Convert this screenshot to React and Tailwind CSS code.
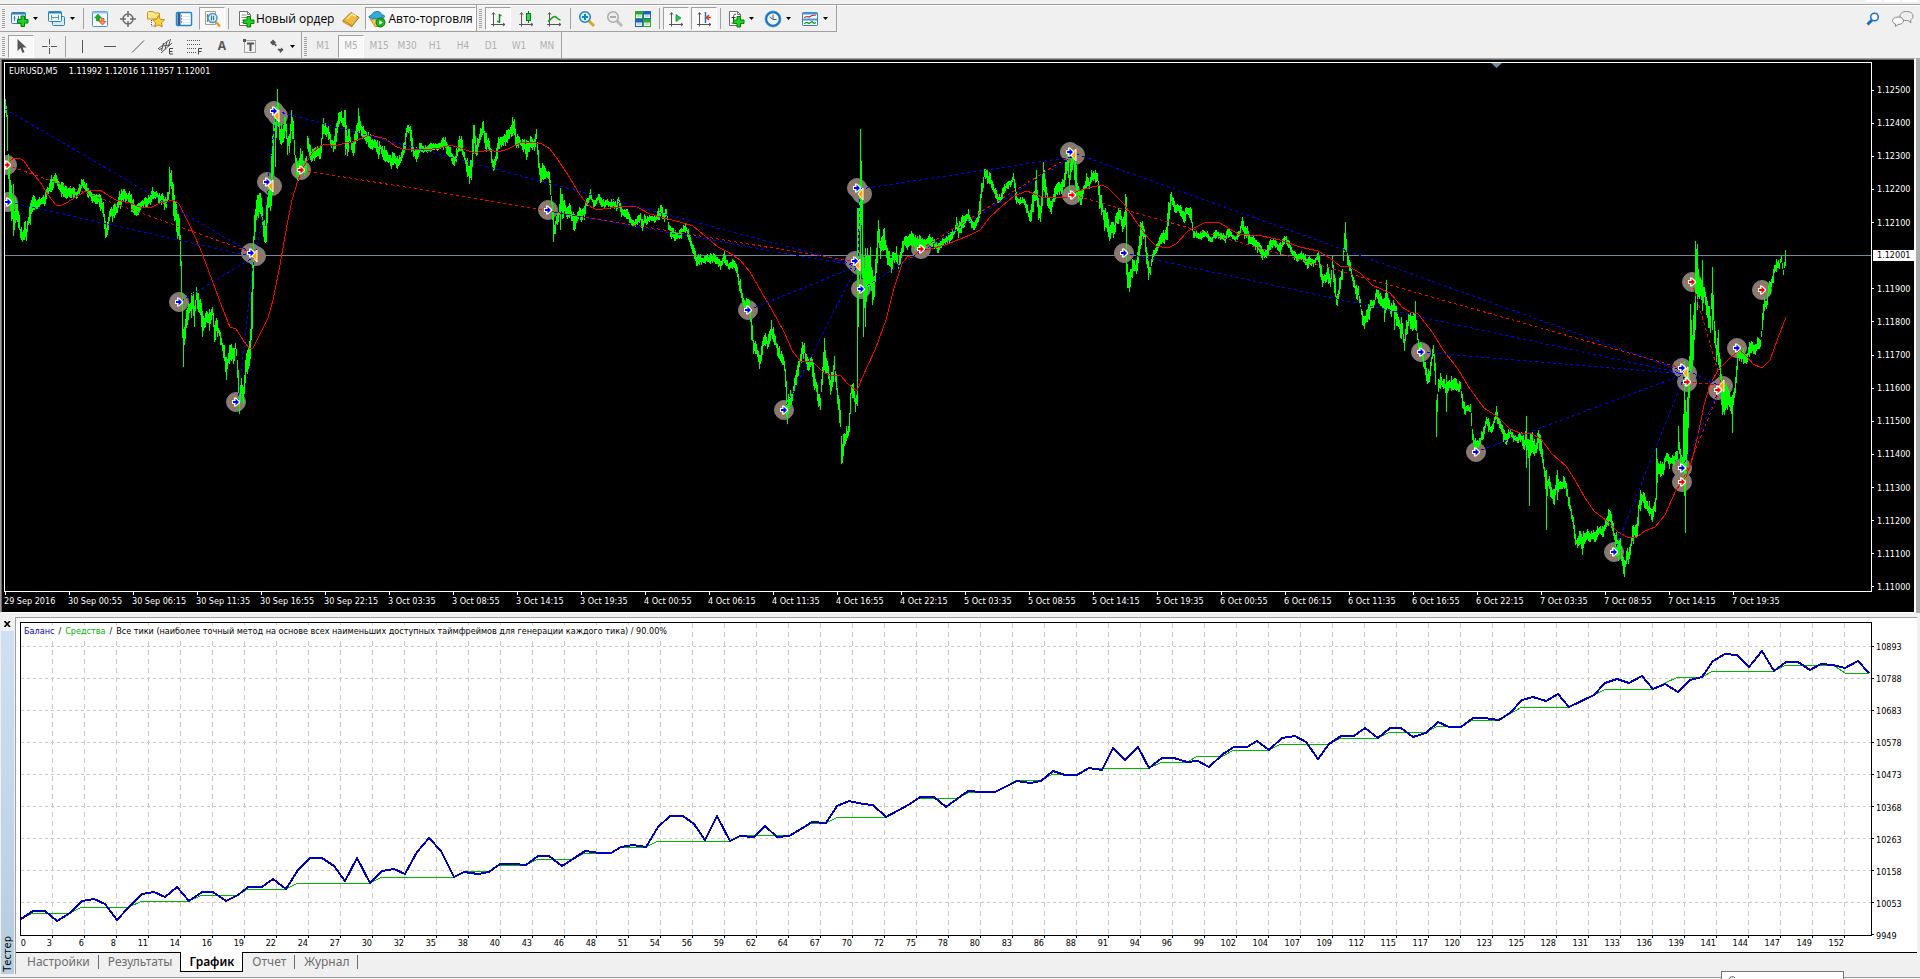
import React from "react";

/* ------------------------------------------------------------------ */
/* Data                                                                */
/* ------------------------------------------------------------------ */

// x, high, low
const PRICE_RANGE = `
4 97 115,6 103 118,7 115 150,8 150 180,9 160 200,10 175 215,12 195 225,14 205 228,16 195 220,18 205 225,20 225 240,22 232 244,
24 218 238,26 228 242,28 212 230,30 200 222,33 195 212,36 198 210,40 196 206,44 195 205,47 188 198,50 178 192,54 173 184,57 178 188,
60 180 195,64 186 196,68 188 198,72 187 197,76 190 198,80 182 192,82 178 186,85 182 192,90 190 200,94 194 204,98 192 206,101 198 212,
103 204 216,105 215 238,106 222 243,108 215 228,110 210 220,113 206 220,116 204 214,120 190 206,123 190 202,127 192 202,131 195 210,
133 198 212,136 205 218,138 202 215,141 200 206,145 197 207,149 195 206,152 186 200,155 190 200,158 192 202,161 194 204,165 198 210,
168 190 204,169 168 195,171 170 188,173 182 215,175 200 225,177 215 240,179 215 240,180 230 270,181 255 300,182 290 340,183 325 367,
184 322 350,186 305 330,188 300 318,190 300 315,192 290 315,194 300 325,196 288 305,198 295 315,200 302 320,202 310 335,204 315 330,
206 308 320,209 312 330,212 306 318,214 325 345,216 320 335,219 328 338,222 338 355,224 348 365,226 358 378,228 352 365,230 340 360,
232 345 358,234 345 365,235 342 350,236 345 360,238 365 395,239 395 412,241 380 400,243 385 402,244 370 392,246 352 375,249 340 370,
250 325 358,252 260 330,253 230 290,254 215 240,256 198 225,258 195 218,259 188 212,261 198 222,263 220 240,265 225 245,266 208 240,
268 188 212,270 185 212,271 150 205,273 120 180,274 105 130,275 110 168,277 90 115,278 105 130,280 125 145,282 125 148,284 115 135,
286 120 140,287 135 155,289 130 150,291 108 135,293 120 145,295 150 165,297 160 180,298 165 185,300 150 165,302 153 165,304 165 178,
306 155 172,307 135 150,309 140 155,311 148 162,313 150 160,316 148 160,318 145 158,320 148 158,322 117 145,324 122 135,327 125 138,
329 130 142,331 138 148,333 138 150,336 125 145,338 112 125,340 110 125,342 115 128,344 112 128,345 111 135,347 135 160,349 128 145,
351 140 150,353 140 155,355 130 150,357 125 142,358 110 135,360 122 132,362 125 138,365 130 142,368 132 145,372 138 150,375 138 148,
378 144 160,380 142 152,384 148 160,388 155 165,391 155 168,393 152 165,396 158 168,400 155 165,403 145 158,405 135 148,407 123 132,
409 123 135,411 130 155,413 148 158,416 148 160,420 143 153,424 146 152,430 144 152,434 144 150,440 140 150,444 138 150,448 142 155,
451 152 162,454 155 168,456 150 162,459 138 152,461 136 150,463 148 158,466 160 172,469 160 188,471 155 180,473 125 155,474 124 140,
476 140 162,478 138 150,480 128 140,483 122 138,486 135 152,489 138 150,491 150 162,493 162 172,496 150 165,498 135 148,502 135 146,
505 132 145,508 130 140,512 120 135,514 122 138,516 135 148,519 138 146,523 140 150,526 140 158,528 138 155,530 138 148,533 140 150,
535 130 148,536 128 140,538 150 168,540 165 182,543 165 178,546 170 180,548 170 182,550 178 195,552 205 222,553 215 240,554 222 235,
556 212 228,558 208 225,560 190 215,562 195 220,564 200 212,567 206 220,570 205 218,572 210 225,574 215 232,576 215 225,579 208 215,
581 210 222,584 205 218,586 198 210,588 196 204,590 190 200,593 200 206,596 198 205,598 192 200,601 198 206,604 200 208,607 198 206,
610 200 208,613 200 208,616 203 212,618 196 206,621 206 218,624 208 216,627 210 218,630 215 226,634 220 227,637 216 224,640 212 222,
642 220 230,644 215 225,646 218 224,650 215 222,654 217 222,658 210 220,661 204 216,664 214 222,666 206 216,668 220 230,670 226 236,
673 230 240,676 232 240,680 230 240,683 224 232,686 226 232,688 230 240,691 238 248,693 245 255,695 253 265,698 254 264,702 256 264,
705 256 263,709 255 263,713 254 264,716 256 264,720 262 270,724 252 262,728 264 270,732 260 268,736 262 272,738 275 288,740 280 292,
743 296 306,745 298 312,749 300 315,751 318 338,753 335 352,755 342 355,757 348 358,759 355 370,761 348 360,764 332 345,767 338 348,
769 330 345,771 322 335,773 328 340,776 340 350,779 348 362,782 355 365,784 360 372,786 380 415,787 395 422,789 392 412,792 392 402,
794 378 390,797 365 380,799 355 368,802 342 358,804 343 355,806 355 368,809 358 370,811 355 368,813 365 385,816 380 395,818 392 405,
820 395 408,822 362 385,824 340 368,826 360 375,828 365 378,830 375 395,832 368 385,834 358 375,836 375 388,838 390 415,840 405 430,
841 430 465,842 440 464,844 430 448,846 428 442,848 425 440,850 395 420,851 380 400,853 385 398,855 395 412,857 385 405,858 210 320,
859 180 230,860 140 205,861 170 225,862 190 280,863 260 335,864 270 310,866 250 300,868 250 290,870 250 285,872 275 300,873 280 305,
875 262 285,877 228 262,878 222 245,880 235 262,882 235 250,884 228 250,886 245 262,889 250 265,891 258 272,893 250 262,896 248 265,
898 262 271,901 245 258,903 238 250,905 234 248,908 238 250,911 232 245,914 236 248,917 235 250,920 235 248,924 238 250,927 235 245,
931 236 246,935 240 250,938 242 252,942 238 246,945 238 244,948 234 243,951 232 240,954 228 236,956 218 230,958 225 238,960 222 234,
963 212 226,965 215 225,968 210 220,971 220 228,974 222 230,976 218 228,978 210 220,980 190 212,982 178 195,984 168 180,986 165 178,
988 172 188,990 173 185,992 182 192,995 190 200,998 194 204,1000 196 206,1003 186 196,1006 182 190,1010 180 186,1013 174 182,
1015 185 200,1017 195 205,1020 198 205,1023 198 204,1026 203 212,1029 210 224,1031 205 220,1033 190 210,1036 175 200,1038 200 218,
1040 205 220,1042 175 205,1043 162 185,1046 185 200,1048 195 208,1050 200 216,1053 192 205,1056 185 195,1058 182 195,1061 178 192,
1063 178 190,1065 160 180,1067 155 172,1069 170 195,1071 158 175,1073 155 165,1075 160 190,1078 185 205,1081 190 205,1083 185 195,
1086 175 188,1089 182 190,1091 170 182,1094 170 182,1097 172 182,1099 188 210,1102 200 216,1104 208 230,1107 215 235,1109 225 240,
1111 222 235,1114 220 236,1116 212 225,1119 208 220,1122 220 232,1125 205 225,1126 200 250,1127 260 290,1129 275 292,1131 265 280,
1133 258 272,1136 262 275,1138 248 265,1140 225 248,1142 222 236,1144 225 240,1146 245 265,1148 262 278,1150 265 275,1152 252 262,
1155 245 255,1158 238 248,1161 232 242,1164 230 242,1166 225 245,1168 205 228,1170 190 210,1171 190 200,1174 202 212,1176 205 215,
1178 202 212,1181 208 216,1184 210 222,1186 206 216,1189 208 218,1191 208 225,1193 228 238,1197 232 238,1200 232 240,1203 230 236,
1207 232 238,1211 236 244,1214 230 238,1218 232 238,1222 234 240,1225 235 242,1227 228 238,1231 232 238,1235 236 242,1239 230 236,
1242 216 228,1244 225 240,1247 228 240,1250 235 246,1253 236 246,1256 240 250,1259 244 254,1262 248 258,1264 252 260,1267 246 256,
1270 240 250,1273 240 246,1277 242 250,1280 244 254,1283 238 246,1285 236 242,1289 242 250,1292 248 256,1295 250 262,1298 254 262,
1301 250 260,1304 255 264,1307 257 268,1310 256 264,1313 260 268,1316 254 262,1318 252 262,1320 260 275,1322 272 288,1325 272 284,
1327 265 280,1330 275 285,1332 258 272,1334 270 290,1336 292 310,1337 290 308,1339 280 295,1342 265 280,1344 235 252,1345 225 245,
1347 250 265,1350 260 275,1352 270 285,1355 283 295,1358 285 300,1360 300 310,1362 312 325,1364 315 328,1367 310 325,1369 300 318,
1371 300 310,1374 296 308,1376 288 300,1379 290 304,1381 296 308,1384 298 312,1386 285 310,1388 298 308,1391 305 318,1393 300 310,
1395 302 325,1398 315 330,1400 320 335,1402 320 340,1404 335 354,1406 322 338,1409 312 325,1412 315 330,1415 312 325,1418 340 350,
1421 345 355,1424 360 370,1427 372 385,1429 370 382,1431 355 370,1433 345 355,1435 360 385,1436 400 434,1438 375 395,1440 375 388,
1443 378 390,1446 385 395,1448 382 392,1451 378 390,1454 378 388,1457 380 390,1460 382 392,1462 395 410,1465 406 414,1468 405 412,
1470 405 412,1472 425 438,1474 438 450,1476 440 450,1478 442 450,1480 435 445,1483 428 438,1486 415 428,1489 422 432,1491 426 434,
1494 415 425,1496 406 420,1499 418 428,1502 426 438,1505 432 446,1508 430 440,1510 428 436,1513 434 442,1516 436 442,1518 434 442,
1521 432 440,1524 436 455,1526 425 440,1527 435 455,1529 440 470,1531 430 455,1533 440 460,1536 440 458,1538 430 448,1541 440 455,
1543 455 475,1546 475 500,1548 475 490,1551 485 500,1554 490 503,1556 475 490,1558 480 492,1560 478 490,1562 480 490,1564 475 488,
1566 482 495,1568 495 505,1571 505 520,1573 518 530,1575 535 548,1577 538 548,1580 530 545,1582 538 553,1584 530 545,1586 530 540,
1589 532 542,1592 530 540,1595 534 544,1597 526 536,1600 526 534,1603 528 536,1605 520 530,1608 510 525,1610 508 520,1612 522 535,
1614 528 545,1616 535 560,1618 540 560,1620 538 555,1622 555 570,1624 562 577,1626 552 565,1628 548 562,1630 540 555,1632 528 545,
1635 522 535,1637 518 535,1639 495 515,1641 490 505,1643 492 505,1645 495 508,1648 502 515,1650 505 516,1652 508 520,1655 498 510,
1656 460 490,1658 460 475,1661 465 480,1663 462 475,1666 450 462,1669 455 468,1671 455 465,1674 455 465,1677 448 460,1678 430 445,
1680 450 462,1682 455 465,1684 380 490,1685 430 500,1687 400 455,1689 350 400,1690 315 370,1692 330 370,1694 300 345,1695 245 300,
1697 250 290,1698 272 295,1700 275 300,1702 290 310,1704 285 300,1706 300 318,1708 300 325,1710 310 330,1712 272 300,1714 320 340,
1716 340 360,1718 335 350,1720 360 395,1722 385 412,1724 395 415,1726 380 410,1728 385 405,1730 395 412,1732 400 420,1734 385 400,
1736 360 380,1738 345 362,1740 350 362,1743 350 362,1746 355 365,1749 342 355,1752 342 352,1755 345 355,1757 338 348,1760 340 348,
1762 315 330,1764 295 310,1766 300 312,1768 285 300,1771 280 290,1773 265 280,1776 260 270,1779 262 268,1781 255 262,1783 268 276,
1785 252 265,1786 250 258`;

// single long bars: x, top, bottom
const SPIKES = [
  [13, 184, 236], [277, 89, 112], [169, 167, 190], [183, 330, 367], [239, 395, 414], [860, 129, 280], [861, 161, 220],
  [857, 208, 400], [858, 208, 327], [863, 270, 335], [865, 248, 327], [872, 270, 305], [560, 188, 230], [345, 110, 155],
  [1125, 194, 225], [1126, 200, 275], [1043, 162, 190], [1036, 170, 200], [1345, 225, 250], [1386, 280, 310], [1436, 400, 434],
  [1415, 301, 330], [1526, 416, 468], [1529, 440, 506], [1546, 470, 530], [1557, 470, 500], [1624, 560, 577], [1685, 400, 533],
  [1684, 361, 496], [1690, 304, 372], [1695, 241, 330], [1697, 244, 310], [1702, 260, 305], [1712, 267, 330], [1718, 330, 365],
  [1732, 395, 433], [1678, 426, 450], [1656, 448, 500], [1446, 375, 412], [1394, 303, 330], [1384, 298, 322],
];

const MOVING_AVERAGE =
  "10,161 14,158 20,158 24,161 30,170 40,182 48,195 56,205 60,206 66,203 76,197 84,192 92,190 100,190 106,194 116,200 130,203 142,208 152,207 160,203 174,200 179,204 190,226 200,248 212,280 222,307 230,327 236,329 243,340 249,348 253,348 260,334 268,318 273,300 280,265 287,225 292,200 298,180 303,168 312,153 320,146 326,144 335,146 345,143 352,142 362,138 370,135 386,139 395,146 402,149 425,150 440,148 450,145 460,148 472,152 478,152 490,150 498,152 508,149 520,143 530,142 542,144 550,149 558,160 570,178 580,195 588,205 597,210 610,208 628,206 637,207 650,214 668,219 680,222 693,226 705,236 718,247 728,252 740,260 750,272 762,293 772,310 784,332 792,350 800,361 813,362 824,373 832,376 840,375 848,384 857,391 862,378 875,350 886,320 894,288 902,264 908,256 912,258 918,252 930,249 945,245 960,239 970,235 980,230 990,217 1002,206 1014,196 1027,191 1042,197 1065,198 1078,191 1092,187 1102,185 1108,188 1124,204 1135,220 1148,238 1156,246 1168,248 1176,244 1188,231 1206,222 1220,223 1238,234 1262,236 1280,240 1300,247 1318,251 1330,258 1340,266 1350,267 1360,273 1372,285 1390,293 1402,307 1410,312 1418,314 1425,323 1433,333 1443,350 1458,369 1468,386 1484,408 1498,417 1510,429 1520,433 1532,434 1541,439 1552,454 1566,466 1575,480 1585,498 1594,511 1607,521 1618,532 1629,538 1637,537 1645,531 1655,527 1665,515 1676,490 1686,477 1692,460 1698,435 1704,405 1710,385 1718,370 1730,358 1740,350 1747,357 1753,364 1762,368 1770,360 1778,338 1786,317";

const BUY = "#0000ff";
const SELL = "#ff0000";

// x1, y1, x2, y2, colour
const DEALS = [
  [5, 109, 250, 252, BUY], [9, 202, 250, 256, BUY], [7, 165, 250, 252, SELL], [181, 301, 256, 256, BUY],
  [238, 402, 254, 256, BUY], [256, 252, 269, 186, BUY], [268, 182, 276, 114, BUY], [276, 111, 857, 265, BUY],
  [302, 170, 857, 262, SELL], [548, 211, 857, 266, BUY], [749, 310, 857, 266, BUY], [784, 410, 857, 266, BUY],
  [858, 262, 860, 190, BUY], [860, 189, 1072, 157, BUY], [862, 289, 1072, 157, BUY], [921, 249, 1072, 155, SELL],
  [1071, 152, 1685, 372, BUY], [1073, 195, 1685, 369, SELL], [1124, 253, 1685, 374, BUY], [1421, 352, 1685, 374, BUY],
  [1476, 452, 1685, 374, BUY], [1614, 552, 1685, 375, BUY], [1687, 382, 1722, 385, SELL], [1682, 368, 1722, 387, BUY],
  [1682, 468, 1722, 385, BUY], [1682, 482, 1722, 385, SELL], [1692, 282, 1722, 385, SELL],
];

const OPENS = [
  [7, 165, SELL], [8, 202, BUY], [179, 302, BUY], [236, 402, BUY], [251, 253, BUY], [267, 182, BUY], [274, 111, BUY],
  [301, 170, SELL], [548, 210, BUY], [748, 310, BUY], [784, 410, BUY], [857, 188, BUY], [855, 261, BUY], [861, 289, BUY],
  [921, 249, SELL], [1070, 152, BUY], [1072, 195, SELL], [1124, 253, BUY], [1421, 352, BUY], [1476, 452, BUY],
  [1614, 552, BUY], [1682, 368, BUY], [1687, 382, SELL], [1692, 282, SELL], [1682, 468, BUY], [1682, 482, SELL],
  [1718, 390, SELL], [1737, 348, BUY], [1762, 290, SELL],
];

const CLOSES = [
  [256, 256], [272, 186], [278, 116], [862, 194], [859, 265], [1075, 155], [1687, 373], [1723, 386],
];

const PRICES = [
  "1.12500", "1.12400", "1.12300", "1.12200", "1.12100", "1.12001", "1.11900", "1.11800",
  "1.11700", "1.11600", "1.11500", "1.11400", "1.11300", "1.11200", "1.11100", "1.11000",
];

const TIMES = [
  "29 Sep 2016", "30 Sep 00:55", "30 Sep 06:15", "30 Sep 11:35", "30 Sep 16:55", "30 Sep 22:15", "3 Oct 03:35",
  "3 Oct 08:55", "3 Oct 14:15", "3 Oct 19:35", "4 Oct 00:55", "4 Oct 06:15", "4 Oct 11:35", "4 Oct 16:55",
  "4 Oct 22:15", "5 Oct 03:35", "5 Oct 08:55", "5 Oct 14:15", "5 Oct 19:35", "6 Oct 00:55", "6 Oct 06:15",
  "6 Oct 11:35", "6 Oct 16:55", "6 Oct 22:15", "7 Oct 03:35", "7 Oct 08:55", "7 Oct 14:15", "7 Oct 19:35",
];

const BALANCE =
  "21,919 33,911 45,911 57,921 70,913 82,901 94,899 105,904 117,920 129,907 142,894 154,892 165,897 177,887 189,901 202,892 213,892 226,901 238,895 248,887 262,887 273,879 286,889 298,870 310,858 322,858 334,866 345,881 357,858 370,883 382,871 394,869 405,874 417,852 429,838 441,851 454,877 464,872 478,874 489,872 500,864 513,864 526,865 538,856 549,856 562,866 573,859 585,851 600,853 611,853 621,847 633,845 646,847 658,827 670,816 683,816 694,824 705,840 717,816 730,841 740,836 754,837 765,826 777,837 789,836 801,829 812,822 826,823 837,806 849,801 863,804 873,805 886,817 910,804 920,797 934,797 946,807 957,799 968,791 982,792 995,792 1017,781 1030,783 1041,781 1053,771 1065,775 1077,775 1089,768 1102,770 1113,748 1125,760 1138,747 1149,768 1162,758 1174,758 1187,762 1198,761 1209,767 1223,754 1234,747 1247,747 1257,741 1269,750 1282,738 1295,736 1306,742 1318,759 1329,744 1341,736 1354,736 1365,728 1378,738 1390,728 1401,728 1413,737 1426,733 1438,722 1449,727 1461,727 1473,718 1484,718 1499,720 1510,713 1522,700 1533,697 1546,701 1558,694 1569,707 1594,695 1605,683 1617,679 1629,683 1642,676 1653,689 1665,684 1678,692 1690,680 1702,677 1713,661 1725,654 1737,655 1749,667 1762,651 1774,671 1786,662 1798,662 1810,670 1821,664 1833,665 1845,668 1858,661 1869,673";

const EQUITY =
  "21,919 33,913 70,913 82,907 129,907 142,901 189,901 202,895 238,895 248,889 286,889 298,883 370,883 382,877 454,877 466,871 489,871 500,865 526,865 538,859 573,859 585,853 611,853 622,847 646,847 658,841 730,841 741,835 790,835 802,829 812,823 826,823 838,817 886,817 920,798 957,798 970,792 995,792 1017,780 1041,780 1053,774 1077,774 1090,768 1149,768 1162,762 1187,762 1198,756 1223,756 1234,750 1269,750 1281,744 1329,744 1341,738 1378,738 1390,732 1426,732 1438,726 1461,726 1473,720 1499,720 1522,707 1569,707 1594,695 1606,689 1653,689 1665,683 1678,677 1702,677 1713,671 1774,671 1786,665 1833,665 1845,673 1869,673";

const BALANCE_LEVELS = [10893, 10788, 10683, 10578, 10473, 10368, 10263, 10158, 10053, 9949];

const TRADE_NUMBERS = [
  3, 6, 8, 11, 14, 16, 19, 22, 24, 27, 30, 32, 35, 38, 40, 43, 46, 48, 51, 54, 56, 59, 62, 64, 67, 70, 72, 75, 78,
  80, 83, 86, 88, 91, 94, 96, 99, 102, 104, 107, 109, 112, 115, 117, 120, 123, 125, 128, 131, 133, 136, 139, 141,
  144, 147, 149, 152,
];

const TIMEFRAMES = ["M1", "M5", "M15", "M30", "H1", "H4", "D1", "W1", "MN"];

// One vertical bar per pixel column, jittered around the recorded range
function buildBars() {
  const pts = PRICE_RANGE.trim().split(",").map((p) => p.trim().split(" ").map(Number));
  let seed = 7;
  const rnd = () => {
    seed = (seed * 16807) % 2147483647;
    return seed / 2147483647;
  };
  let d = "";
  for (let i = 0; i < pts.length - 1; i++) {
    const [x0, h0, l0] = pts[i];
    const [x1, h1, l1] = pts[i + 1];
    for (let x = x0; x < x1; x++) {
      const t = (x - x0) / (x1 - x0);
      const hi = h0 + (h1 - h0) * t;
      const lo = l0 + (l1 - l0) * t;
      const range = Math.min(lo - hi, 20);
      const a = Math.round(hi + (rnd() - 0.35) * range * 0.5);
      const b = Math.round(lo + (rnd() - 0.65) * range * 0.5);
      d += `M${x + 0.5} ${Math.min(a, b - 3)}V${Math.max(b, a + 3)}`;
    }
  }
  SPIKES.forEach(([x, a, b]) => {
    d += `M${x + 0.5} ${a}V${b}`;
  });
  return d;
}

const BARS = buildBars();

/* ------------------------------------------------------------------ */
/* Toolbar icons                                                       */
/* ------------------------------------------------------------------ */

const Svg = ({ children, w = 18 }) => (
  <svg width={w} height="18" viewBox={`0 0 ${w} 18`} fill="none" className="shrink-0" aria-hidden="true">
    {children}
  </svg>
);

const Plus = ({ x = 6, y = 5 }) => (
  <path
    transform={`translate(${x} ${y})`}
    d="M4 .5h3.500v3.500h3.500v3.500h-3.500v3.500h-3.500v-3.500h-3.500v-3.500h3.500z"
    fill="#1fd21f"
    stroke="#067a06"
  />
);

const Axes = () => (
  <path d="M4.500 3v13.500M2 14.500h14M3 4.500l1.500-2 1.500 2M14 13l2 1.500-2 1.500" stroke="#555" />
);

const Page = () => (
  <>
    <path d="M2.500 1.500h8l3 3v11h-11z" fill="#fff" stroke="#6f6f6f" />
    <path d="M10.500 1.500v3h3" stroke="#6f6f6f" />
  </>
);

const NewChartIcon = () => (
  <Svg>
    <rect x=".5" y="2.500" width="14" height="11" rx="1" fill="#eaf5fc" stroke="#2d83bd" />
    <path d="M.5 3.500h14" stroke="#2d83bd" strokeWidth="2" />
    <path d="M3.500 6v5M2.500 8h2M7.500 6v5M6.500 9h2" stroke="#4a7fa5" />
    <Plus x={6} y={5.5} />
  </Svg>
);

const ProfilesIcon = () => (
  <Svg>
    <rect x="4.500" y="6.500" width="12" height="9" rx="1" fill="#d9edf9" stroke="#2d83bd" />
    <rect x=".5" y="1.500" width="13" height="10" rx="1" fill="#eef7fd" stroke="#2d83bd" />
    <path d="M.5 2.500h13" stroke="#2d83bd" strokeWidth="2" />
    <path d="M3.500 5v5M3.500 7.500h7M10.500 5v5" stroke="#5f95ba" />
  </Svg>
);

const MarketWatchIcon = () => (
  <Svg>
    <rect x="1.500" y="1.500" width="15" height="15" rx="1" fill="#fff" stroke="#3c96d2" />
    <path d="M2 2.500h14" stroke="#8cc4ea" strokeWidth="2" />
    <path d="M7 4l3.500 4h-2v3h-3v-3h-2z" fill="#16b316" stroke="#0a780a" strokeWidth=".5" />
    <path d="M11.500 15l3.500-3.500h-2v-3h-3v3h-2z" fill="#ff8a5c" stroke="#d8400e" strokeWidth=".7" />
  </Svg>
);

const TargetIcon = () => (
  <Svg>
    <circle cx="9" cy="9" r="5" stroke="#6b6b6b" strokeWidth="1.500" />
    <path d="M9 1v6M9 11v6M1 9h6M11 9h6" stroke="#6b6b6b" strokeWidth="1.500" />
  </Svg>
);

const FolderStarIcon = () => (
  <Svg>
    <path d="M.5 2.500l1-1h5l1 1.500h5v6h-12z" fill="#ffe48a" stroke="#c69a1c" />
    <path d="M4.500 10v6h3" stroke="#555" strokeDasharray="1 1" />
    <path d="M11.500 5.500l1.800 3.800 4.200.5-3.100 2.900.8 4.200-3.700-2.100-3.700 2.100.8-4.200-3.100-2.900 4.200-.5z" fill="#ffd23c" stroke="#c58a0c" />
  </Svg>
);

const TerminalIcon = () => (
  <Svg>
    <rect x="1.500" y="2.500" width="15" height="13" rx="1" fill="#fff" stroke="#2a86c8" strokeWidth="1.500" />
    <path d="M4 3v12" stroke="#1d5f9d" strokeWidth="3" />
    <path d="M8 6.500h7M8 9.500h7M8 12.500h7" stroke="#d9e6ef" />
    <path d="M6.500 5v2M6.500 8v2M6.500 11v2" stroke="#e06a5a" />
  </Svg>
);

const TesterIcon = () => (
  <Svg>
    <path d="M2.500 1.500h10v13h-10z" fill="#faf7ee" stroke="#a8a08c" />
    <path d="M4.500 4v8M3.500 6h2" stroke="#777" />
    <circle cx="9.500" cy="8" r="4.500" fill="#cfe9fa" stroke="#4c96c8" strokeWidth="1.500" />
    <path d="M8.500 5.500v5M10.500 6v4" stroke="#2e6f9e" />
    <path d="M13 12l4 4.500" stroke="#e0a01c" strokeWidth="2.500" />
  </Svg>
);

const NewOrderIcon = () => (
  <Svg>
    <Page />
    <path d="M4.500 5h5M4.500 7.500h6M4.500 10h4M4.500 12.500h3" stroke="#8a8a8a" />
    <Plus x={6} y={6} />
  </Svg>
);

const MetaEditorIcon = () => (
  <Svg>
    <path d="M1 10.500l8-8 8 5-7 8.500z" fill="#f0b83c" stroke="#a86c08" />
    <path d="M1 10.500l9 5.500v1l-9-5z" fill="#fff1c0" stroke="#a86c08" strokeWidth=".7" />
    <path d="M5 9l5-5 4 2.500" stroke="#fde6a0" strokeWidth="1.500" />
  </Svg>
);

const AutoTradingIcon = () => (
  <Svg>
    <path d="M2 8.500c2 2 12 2 14 0l-3 8h-6z" fill="#f3cf63" stroke="#b98b1c" />
    <path d="M.8 7c1-2 3-1.500 3.700-3C5.500 1 12 .5 13 3.500c.5 1.500 3 1.500 4 3-3 2.500-13 3-16.200.5z" fill="#35a9dd" stroke="#1878a8" />
    <circle cx="12.500" cy="12.500" r="4.500" fill="#19b319" stroke="#0a7d0a" />
    <path d="M11.300 10.200v4.600l3.700-2.300z" fill="#fff" />
  </Svg>
);

const BarChartIcon = () => (
  <Svg>
    <Axes />
    <path d="M8 11.500h2.500M10.500 4v9M10.500 5.500h2" stroke="#0b950b" strokeWidth="1.500" />
  </Svg>
);

const CandleIcon = () => (
  <Svg>
    <Axes />
    <path d="M11.500 1v12" stroke="#067a06" />
    <rect x="9.500" y="3.500" width="4" height="7" fill="#2edb5a" stroke="#067a06" />
  </Svg>
);

const LineChartIcon = () => (
  <Svg>
    <Axes />
    <path d="M3 11.500c2-1 4.500-5.500 7-5 2 .5 2.500 3 5.500 3.500" stroke="#16a016" strokeWidth="1.500" />
  </Svg>
);

const Magnifier = ({ ring, fill, handle, plus }) => (
  <Svg>
    <path d="M11 11l5 5" stroke={handle} strokeWidth="3" />
    <circle cx="7" cy="7" r="5.300" fill={fill} stroke={ring} strokeWidth="1.500" />
    <path d={plus ? "M4 7h6M7 4v6" : "M4 7h6"} stroke={ring} strokeWidth="2" />
  </Svg>
);

const TileIcon = () => (
  <Svg>
    <rect x="1" y="1" width="8" height="8" fill="#2aa828" />
    <rect x="9" y="1" width="8" height="8" fill="#1c62c4" />
    <rect x="1" y="9" width="8" height="8" fill="#1c62c4" />
    <rect x="9" y="9" width="8" height="8" fill="#2aa828" />
    <path d="M2 4.500h6v3.500h-6zM10 4.500h6v3.500h-6zM2 12.500h6v3.500h-6zM10 12.500h6v3.500h-6z" fill="#eef6ea" />
    <path d="M3 6h4M11 6h4M3 14h4M11 14h4" stroke="#9ab6c8" />
  </Svg>
);

const AutoScrollIcon = () => (
  <Svg>
    <Axes />
    <path d="M9 4.500v7l5-3.500z" fill="#22c34a" stroke="#0a8a2a" strokeWidth=".7" />
  </Svg>
);

const ChartShiftIcon = () => (
  <Svg>
    <Axes />
    <path d="M10.500 2v11" stroke="#2a6fb0" strokeWidth="1.500" />
    <path d="M16 7.500h-4M14 5l-2.500 2.500 2.500 2.500" stroke="#c8401c" strokeWidth="1.500" />
  </Svg>
);

const IndicatorsIcon = () => (
  <Svg>
    <Page />
    <path d="M9 4.500c-2-1-2.500 1-2.500 3v4c0 1.500-1 2-2 1.500M4.500 7.500h4" stroke="#333" />
    <Plus x={6} y={6} />
  </Svg>
);

const ClockIcon = () => (
  <Svg>
    <circle cx="9" cy="9" r="7" fill="#eef6fc" stroke="#1c72bc" strokeWidth="2.500" />
    <circle cx="9" cy="9" r="8" stroke="#5fb0ea" strokeWidth=".6" />
    <path d="M9 4.500v5h3.500M5.500 7l3 2" stroke="#555" />
  </Svg>
);

const TemplatesIcon = () => (
  <Svg>
    <rect x="1.500" y="2.500" width="15" height="13" rx="1" fill="#fff" stroke="#2d83bd" />
    <path d="M1.500 3.500h15M2 9.500h14" stroke="#3f9bd8" strokeWidth="2" />
    <path d="M3 7.500l3-1 2 .5 3-1.500 4-.5" stroke="#c0281c" strokeWidth="1.200" />
    <path d="M3 13.500l3-1 2 1 3-2 2 2 2-1" stroke="#189018" strokeWidth="1.200" />
  </Svg>
);

const CursorIcon = () => (
  <Svg>
    <path d="M5.500 2v12l3-3 2 5 2-1-2-4.500h4z" fill="#555" />
  </Svg>
);

const CrosshairIcon = () => (
  <Svg>
    <path d="M9.500 2v5.500M9.500 11v6M2 9.500h5.500M11 9.500h6" stroke="#555" />
    <path d="M9 9.500h1" stroke="#555" />
  </Svg>
);

const VLineIcon = () => (
  <Svg>
    <path d="M9.500 3v13" stroke="#555" strokeWidth="1" />
  </Svg>
);

const HLineIcon = () => (
  <Svg>
    <path d="M3 9.500h12" stroke="#555" />
  </Svg>
);

const TrendIcon = () => (
  <Svg>
    <path d="M3 15.500l12-12" stroke="#555" />
  </Svg>
);

const ChannelIcon = () => (
  <Svg>
    <path d="M1 12l11-9M4 16l11-10M4.500 14l2-8M8 12.500l2-8M11.500 9l2-7M2 12.500l3-1M6 9l7-1" stroke="#555" />
    <path d="M16 11.500h-3.500v5.500h3.500M12.500 14.500h3" stroke="#444" />
  </Svg>
);

const FiboIcon = () => (
  <Svg>
    <path d="M2 3.500h14M2 7.500h14M2 11.500h9M2 15.500h9" stroke="#555" strokeDasharray="1 1" />
    <path d="M17 11.500h-3.500v6M13.500 14.500h3" stroke="#444" />
  </Svg>
);

const LabelIcon = () => (
  <Svg>
    <rect x="3.500" y="3.500" width="11" height="12" stroke="#555" strokeDasharray="1 1" />
    <path d="M6 6.500h7M9.500 6v8" stroke="#555" strokeWidth="2" />
    <path d="M2 2h3v3h-3z" fill="#555" />
  </Svg>
);

const ArrowsIcon = () => (
  <Svg>
    <path d="M5 2.500l3 3-1 1 2 1.500-1.500 1.500-1.500-2-1 1-3-3z" fill="#555" />
    <path d="M15.500 13l-3.500 3-.5-2-2-1 1-1.500 2 .5 1-1.500z" fill="#555" />
  </Svg>
);

const SearchIcon = () => (
  <svg width="14" height="14" viewBox="0 0 14 14" fill="none" aria-hidden="true">
    <path d="M1.500 12.500l4.500-4.500" stroke="#1a6cc8" strokeWidth="3" />
    <circle cx="8.500" cy="5" r="3.800" fill="#fff" stroke="#1a6cc8" strokeWidth="1.500" />
  </svg>
);

const ChatIcon = () => (
  <svg width="22" height="16" viewBox="0 0 22 16" fill="none" aria-hidden="true">
    <path d="M14.500.5c4 0 6.500 2 6.500 4.500 0 2-1 3-2.500 4l.5 3-3-2.500c-4.500.5-8-1.500-8-4.500 0-2.500 2.500-4.500 6.500-4.500z" fill="#eceef2" stroke="#8b8b8b" />
    <path d="M6 6c3 0 5.500 1.500 5.500 3.700S9 13.500 6 13.500L3.500 15.500V13C1.500 12.500.5 11 .5 9.700.5 7.500 3 6 6 6z" fill="#f7f8fa" stroke="#8b8b8b" />
  </svg>
);

/* ------------------------------------------------------------------ */
/* Toolbar parts                                                       */
/* ------------------------------------------------------------------ */

const Grip = () => (
  <span className="mx-[2px] h-[19px] w-[3px] shrink-0 bg-[repeating-linear-gradient(#a0a0a0_0_1px,#f0f0f0_1px_2px)]" />
);

const Separator = () => <span className="mx-[2px] h-[21px] w-px shrink-0 bg-[#a0a0a0]" />;

const ToolButton = ({ label, pressed, children }) => (
  <button
    type="button"
    aria-label={label}
    className={`mx-px flex h-[23px] w-[26px] shrink-0 items-center justify-center border ${
      pressed ? "border-t-[#a0a0a0] border-l-[#a0a0a0] border-r-white border-b-white bg-[#f8f8f8]" : "border-transparent"
    }`}
  >
    {children}
  </button>
);

const SplitButton = ({ label, children }) => (
  <button type="button" aria-label={label} className="flex h-[23px] w-[37px] shrink-0 items-center gap-1 pl-1">
    {children}
    <svg width="5" height="3" viewBox="0 0 5 3" aria-hidden="true">
      <path d="M0 0h5l-2.500 3z" fill="#000" />
    </svg>
  </button>
);

const MainToolbar = () => (
  <div className="flex h-[27px] items-stretch">
    <div className="flex items-center border-r border-b border-[#a0a0a0] pt-px">
      <Grip />
      <SplitButton label="Новый график"><NewChartIcon /></SplitButton>
      <SplitButton label="Профили"><ProfilesIcon /></SplitButton>
      <Separator />
      <ToolButton label="Обзор рынка"><MarketWatchIcon /></ToolButton>
      <ToolButton label="Окно данных"><TargetIcon /></ToolButton>
      <ToolButton label="Навигатор"><FolderStarIcon /></ToolButton>
      <ToolButton label="Терминал"><TerminalIcon /></ToolButton>
      <ToolButton label="Тестер стратегий" pressed><TesterIcon /></ToolButton>
      <Separator />
      <button type="button" className="flex h-[23px] shrink-0 items-center gap-px pr-[3px] pl-[6px] whitespace-nowrap">
        <NewOrderIcon />
        Новый ордер
      </button>
      <ToolButton label="MetaEditor"><MetaEditorIcon /></ToolButton>
      <button
        type="button"
        className="flex h-[23px] shrink-0 items-center gap-[2px] border border-t-[#a0a0a0] border-r-white border-b-white border-l-[#a0a0a0] bg-[#f8f8f8] px-[2px] whitespace-nowrap"
      >
        <AutoTradingIcon />
        Авто-торговля
      </button>
    </div>
    <div className="flex items-center border-r border-b border-[#a0a0a0] pt-px pr-[2px]">
      <Grip />
      <ToolButton label="Бары" pressed><BarChartIcon /></ToolButton>
      <ToolButton label="Свечи"><CandleIcon /></ToolButton>
      <ToolButton label="Линия"><LineChartIcon /></ToolButton>
      <Separator />
      <ToolButton label="Увеличить"><Magnifier ring="#1c82c8" fill="#d8effc" handle="#e2a41c" plus /></ToolButton>
      <ToolButton label="Уменьшить"><Magnifier ring="#aaaaaa" fill="#eeeeee" handle="#b8b8b8" /></ToolButton>
      <ToolButton label="Расположить окна"><TileIcon /></ToolButton>
      <Separator />
      <ToolButton label="Автопрокрутка" pressed><AutoScrollIcon /></ToolButton>
      <ToolButton label="Сдвиг графика" pressed><ChartShiftIcon /></ToolButton>
      <Separator />
      <SplitButton label="Индикаторы"><IndicatorsIcon /></SplitButton>
      <SplitButton label="Периоды"><ClockIcon /></SplitButton>
      <SplitButton label="Шаблоны"><TemplatesIcon /></SplitButton>
    </div>
    <div className="ml-auto flex items-center gap-3 pr-[6px]">
      <button type="button" aria-label="Поиск"><SearchIcon /></button>
      <button type="button" aria-label="Чат"><ChatIcon /></button>
    </div>
  </div>
);

const DrawingToolbar = () => (
  <div className="flex h-[26px] items-stretch">
    <div className="flex items-center border-r border-[#a0a0a0] pt-[2px]">
      <Grip />
      <ToolButton label="Курсор" pressed><CursorIcon /></ToolButton>
      <ToolButton label="Перекрестие"><CrosshairIcon /></ToolButton>
      <Separator />
      <ToolButton label="Вертикальная линия"><VLineIcon /></ToolButton>
      <ToolButton label="Горизонтальная линия"><HLineIcon /></ToolButton>
      <ToolButton label="Трендовая линия"><TrendIcon /></ToolButton>
      <ToolButton label="Канал"><ChannelIcon /></ToolButton>
      <ToolButton label="Фибоначчи"><FiboIcon /></ToolButton>
      <ToolButton label="Текст">
        <span className="text-xs font-bold text-[#555]">A</span>
      </ToolButton>
      <ToolButton label="Метка"><LabelIcon /></ToolButton>
      <SplitButton label="Стрелки"><ArrowsIcon /></SplitButton>
    </div>
    <div className="flex items-center border-r border-[#a0a0a0] pt-[2px] font-['DejaVu_Sans_Condensed','DejaVu_Sans',sans-serif] text-[10px] text-[#b0b0b0]">
      <Grip />
      {TIMEFRAMES.map((tf) => (
        <ToolButton key={tf} label={tf} pressed={tf === "M5"}>{tf}</ToolButton>
      ))}
    </div>
  </div>
);

/* ------------------------------------------------------------------ */
/* Price chart                                                         */
/* ------------------------------------------------------------------ */

const OpenMark = ({ x, y, color }) => (
  <g transform={`translate(${x} ${y})`}>
    <path d="M-4-2h2v-2.500h2l4 3.500v2l-4 3.500h-2v-2.500h-2z" fill="#fff" />
    <path d="M-3-1h2.500v-2.500l3.500 3.500-3.500 3.500v-2.500h-2.500z" fill={color} />
  </g>
);

const CloseMark = ({ x, y }) => (
  <path transform={`translate(${x} ${y})`} d="M1-6l-5 6 5 6z" fill="#ffa500" stroke="#fff" />
);

const PriceChart = () => (
  <section className="flex bg-[#ababab] pr-1" aria-label="EURUSD,M5">
    <div className="min-w-0 grow border border-r-2 border-t-[#a0a0a0] border-r-white border-b-white border-l-[#a0a0a0]">
      <div className="border-t border-l border-[#696969] bg-black pt-[2px] pl-[2px] text-white">
        <div className="flex">
          <div className="relative h-[530px] min-w-0 grow">
            <svg className="h-full w-full" viewBox="4 62 1868 530" preserveAspectRatio="none" fill="none">
              <path d="M4 255.500h1868" stroke="#778899" />
              {OPENS.map(([x, y], i) => (
                <circle key={i} cx={x} cy={y} r="9.500" fill="#8f7868" stroke="#708090" />
              ))}
              {CLOSES.map(([x, y], i) => (
                <circle key={i} cx={x} cy={y} r="9.500" fill="#8f7868" stroke="#708090" />
              ))}
              <path d={BARS} stroke="#00ff00" shapeRendering="crispEdges" />
              <polyline points={MOVING_AVERAGE} stroke="#ff0000" shapeRendering="crispEdges" />
              {DEALS.map(([x1, y1, x2, y2, color], i) => (
                <line key={i} x1={x1} y1={y1} x2={x2} y2={y2} stroke={color} strokeDasharray="3 3" shapeRendering="crispEdges" />
              ))}
              {CLOSES.map(([x, y], i) => <CloseMark key={i} x={x} y={y} />)}
              {OPENS.map(([x, y, color], i) => <OpenMark key={i} x={x} y={y} color={color} />)}
              <path d="M1491 63h11l-5.500 5z" fill="#778899" />
              <rect x="4.500" y="62.500" width="1867" height="529" stroke="#fff" />
            </svg>
            <p className="absolute top-[3px] left-[5px] flex gap-[11px] leading-3 whitespace-nowrap">
              <span>EURUSD,M5</span>
              <span>1.11992 1.12016 1.11957 1.12001</span>
            </p>
          </div>
          <div className="flex w-[42px] shrink-0 flex-col justify-between pt-[23px]">
            {PRICES.map((p) => (
              <div key={p} className="flex h-[10px] items-center">
                {p === "1.12001" ? (
                  <span className="ml-px w-full bg-white pl-1 leading-[11px] text-black">{p}</span>
                ) : (
                  <>
                    <span className="mr-[3px] h-px w-[2px] bg-white" />
                    {p}
                  </>
                )}
              </div>
            ))}
          </div>
        </div>
        <div className="flex h-5 overflow-hidden">
          {TIMES.map((t) => (
            <div key={t} className="w-16 shrink-0 whitespace-nowrap">
              <span className="ml-px block h-[3px] w-px bg-white" />
              <span className="block leading-3">{t}</span>
            </div>
          ))}
        </div>
      </div>
    </div>
  </section>
);

/* ------------------------------------------------------------------ */
/* Strategy tester                                                     */
/* ------------------------------------------------------------------ */

const BalanceChart = () => (
  <div className="flex bg-white pt-1 pl-1">
    <div className="min-w-0 grow">
      <div className="relative h-[314px]">
        <svg className="h-full w-full overflow-visible" viewBox="20 622 1852 314" preserveAspectRatio="none" fill="none">
          <g stroke="#c8c8c8" shapeRendering="crispEdges">
            {TRADE_NUMBERS.map((n, i) => (
              <path key={n} d={`M${52.5 + i * 32} 623V935`} strokeDasharray="5 4" />
            ))}
            {BALANCE_LEVELS.slice(0, -1).map((n, i) => (
              <path key={n} d={`M21 ${646.5 + i * 32}H1871`} strokeDasharray="3 3" />
            ))}
          </g>
          <g stroke="#000" shapeRendering="crispEdges">
            {TRADE_NUMBERS.map((n, i) => (
              <path key={n} d={`M${52.5 + i * 32} 936v2`} />
            ))}
            {BALANCE_LEVELS.map((n, i) => (
              <path key={n} d={`M1872 ${646.5 + i * 32}h2`} />
            ))}
            <rect x="20.500" y="622.500" width="1851" height="313" />
          </g>
          <polyline points={EQUITY} stroke="#00b400" shapeRendering="crispEdges" />
          <polyline points={BALANCE} stroke="#0000b4" strokeWidth="2" shapeRendering="crispEdges" />
        </svg>
        <p className="absolute top-[3px] left-1 flex gap-1 bg-white leading-3 whitespace-nowrap">
          <span className="text-[#0000b4]">Баланс</span>
          <span>/</span>
          <span className="text-[#00b400]">Средства</span>
          <span>/</span>
          <span>
            Все тики (наиболее точный метод на основе всех наименьших доступных таймфреймов для генерации каждого тика) /
            90.00%
          </span>
        </p>
      </div>
      <div className="flex h-4 text-right leading-[14px]">
        <span className="w-[6px] shrink-0">0</span>
        {TRADE_NUMBERS.map((n) => (
          <span key={n} className="w-8 shrink-0 nth-2:w-[26px]">{n}</span>
        ))}
      </div>
    </div>
    <div className="flex h-[319px] w-[45px] shrink-0 flex-col justify-between pt-5 pl-1">
      {BALANCE_LEVELS.map((n) => (
        <span key={n} className="h-[10px] leading-[10px]">{n}</span>
      ))}
    </div>
  </div>
);

const TABS = ["Настройки", "Результаты", "График", "Отчет", "Журнал"];

const Tabs = () => (
  <div role="tablist" className="flex h-[22px] items-start border-t border-black pl-[2px] font-['Noto_Sans',sans-serif] text-xs text-[#6d6d6d]">
    {TABS.map((tab) =>
      tab === "График" ? (
        <button
          key={tab}
          type="button"
          role="tab"
          aria-selected="true"
          className="-mt-px h-5 border border-t-0 border-black bg-white px-2 leading-[18px] font-semibold text-black"
        >
          {tab}
        </button>
      ) : (
        <button
          key={tab}
          type="button"
          role="tab"
          aria-selected="false"
          className="flex h-[18px] items-center pl-[9px] leading-[18px]"
        >
          {tab}
          {tab === "Результаты" ? <span className="w-2" /> : <span className="ml-2 h-[14px] w-px bg-[#6d6d6d]" />}
        </button>
      )
    )}
  </div>
);

const Tester = () => (
  <section className="flex pt-1" aria-label="Тестер">
    <div className="flex w-[15px] shrink-0 flex-col items-center">
      <button type="button" aria-label="Закрыть" className="flex h-[14px] items-center">
        <svg width="7" height="6" viewBox="0 0 7 6" aria-hidden="true">
          <path d="M.5 0l5.500 6M6 0L.5 6" stroke="#000" strokeWidth="1.600" />
        </svg>
      </button>
      <div className="flex w-[13px] grow items-center bg-linear-to-b from-[#cfe1f0] to-[#b6cddf]">
        <span className="mt-auto rotate-180 pt-[2px] font-['DejaVu_Sans_Condensed','DejaVu_Sans',sans-serif] text-[11px] leading-[13px] [writing-mode:vertical-rl]">
          Тестер
        </span>
      </div>
    </div>
    <div className="mr-[3px] min-w-0 grow border-t border-l border-[#a0a0a0]">
      <BalanceChart />
      <Tabs />
    </div>
  </section>
);

export default function App() {
  return (
    <div className="relative min-h-screen overflow-hidden bg-[#f0f0f0] font-['Open_Sans','Noto_Sans',sans-serif] text-xs text-black">
      <header>
        <div className="flex h-1 justify-end gap-[2px] pr-[2px]">
          <span className="h-[2px] w-4 bg-white" />
          <span className="h-[2px] w-4 bg-white" />
          <span className="h-[2px] w-4 bg-white" />
        </div>
        <div className="border-t border-[#a0a0a0] shadow-[inset_0_1px_#fff]">
          <MainToolbar />
          <DrawingToolbar />
        </div>
      </header>
      <main className="font-['DejaVu_Sans_Condensed','DejaVu_Sans',sans-serif] text-[9px]">
        <PriceChart />
        <Tester />
      </main>
      <footer className="h-1 border-b border-[#a0a0a0]" />
      <div className="absolute right-[76px] bottom-0 h-2 w-[123px] border border-b-0 border-[#767676] bg-white pt-1 pl-[6px]">
        <svg width="8" height="3" viewBox="0 0 8 3" fill="none" aria-hidden="true">
          <path d="M1 3c.5-2.500 5-3 6-1" stroke="#555" />
        </svg>
      </div>
    </div>
  );
}
